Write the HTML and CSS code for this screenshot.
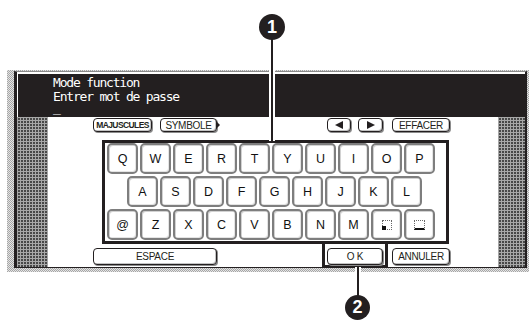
FILE: index.html
```html
<!DOCTYPE html>
<html lang="fr">
<head>
    <meta charset="UTF-8">
    <title>Mode function</title>
    <link rel="stylesheet" href="styles.css">
</head>
<body>
<div class="frame">
    <div class="screen">
        <div class="header">
            <div>Mode function</div>
            <div>Entrer mot de passe</div>
            <div class="cursor">_</div>
        </div>
        <div class="body-row">
            <div class="grid grid-l"></div>
            <div class="panel">
                <div class="toolbar">
                    <span class="btn btn-maj">MAJUSCULES</span>
                    <span class="btn btn-sym">SYMBOLE</span>
                    <span class="btn btn-left"><i class="tri tri-left"></i></span>
                    <span class="btn btn-right"><i class="tri tri-right"></i></span>
                    <span class="btn btn-eff">EFFACER</span>
                </div>
                <div class="keyboard">
                    <div class="krow">
                        <span class="key">Q</span><span class="key">W</span><span class="key">E</span><span class="key">R</span><span class="key">T</span><span class="key">Y</span><span class="key">U</span><span class="key">I</span><span class="key">O</span><span class="key">P</span>
                    </div>
                    <div class="krow krow-mid">
                        <span class="key">A</span><span class="key">S</span><span class="key">D</span><span class="key">F</span><span class="key">G</span><span class="key">H</span><span class="key">J</span><span class="key">K</span><span class="key">L</span>
                    </div>
                    <div class="krow">
                        <span class="key">@</span><span class="key">Z</span><span class="key">X</span><span class="key">C</span><span class="key">V</span><span class="key">B</span><span class="key">N</span><span class="key">M</span>
                        <span class="key"><i class="ph ph-dot"></i></span>
                        <span class="key"><i class="ph ph-space"></i></span>
                    </div>
                </div>
                <div class="bottom">
                    <span class="btn btn-espace">ESPACE</span>
                    <div class="ok-box">
                        <span class="btn btn-ok">O K</span>
                    </div>
                    <span class="btn btn-annuler">ANNULER</span>
                </div>
            </div>
            <div class="grid grid-r"></div>
        </div>
    </div>
</div>

<div class="lead lead-1"></div>
<div class="badge badge-1">1</div>
<div class="lead lead-2"></div>
<div class="badge badge-2">2</div>
</body>
</html>
```

FILE: styles.css
```css
*{
    margin: 0;
    padding: 0;
    box-sizing: border-box;
}
body{
    position: relative;
    width: 531px;
    height: 321px;
    overflow: hidden;
    background: #fff;
    color: #1e1b1c;
    font-family: "Liberation Sans", Arial, sans-serif;
}
i{
    display: block;
}

/* device frame */
.frame{
    margin: 70px 0 0 7px;
    width: 522px;
    height: 202px;
    padding: 1px 2px 4px 7px;
    background: repeating-conic-gradient(#a6a6a6 0 25%, #e4e4e4 0 50%) 0 0 / 2px 2px;
}
.screen{
    display: flex;
    flex-direction: column;
    height: 197px;
    padding-top: 2px;
    background: #fff;
    border-top: 1px solid #8a8a8a;
    border-left: 3px solid #231f20;
    border-right: 2px solid #231f20;
    border-bottom: 1px solid #231f20;
}
.header{
    height: 43px;
    margin-left: 1px;
    padding: 2px 0 0 35px;
    background: #231f20;
    color: #fff;
    font-family: "DejaVu Sans Mono", monospace;
    font-size: 13px;
    letter-spacing: -1.2px;
    line-height: 14px;
}
.cursor{
    line-height: 8px;
}
.body-row{
    display: flex;
    height: 150px;
}
.grid{
    background-color: #484848;
    background-image: linear-gradient(90deg, #a8a8a8 1px, transparent 1px),
                      linear-gradient(#a8a8a8 1px, transparent 1px);
    background-size: 3px 3px;
}
.grid-l{
    width: 31px;
}
.grid-r{
    width: 27px;
}
.panel{
    flex: 1;
    padding: 1px 0 0 45px;
}

/* buttons */
.btn{
    position: relative;
    display: flex;
    align-items: center;
    justify-content: center;
    height: 14px;
    background: #fff;
    border: 1px solid #231f20;
    border-radius: 4px;
    box-shadow: 1px 1px 0 #8c8c8c, inset -1px -1px 0 #c4c4c4;
    font-size: 10px;
    letter-spacing: -0.3px;
    color: #231f20;
}
.toolbar{
    display: flex;
}
.btn-maj{
    width: 59px;
    font-weight: bold;
    font-size: 8.5px;
    letter-spacing: -0.6px;
}
.btn-sym{
    width: 57px;
    margin-left: 8px;
}
.btn-sym::after{
    content: "";
    position: absolute;
    right: -4px;
    top: 2px;
    border-left: 4px solid #231f20;
    border-top: 4px solid transparent;
    border-bottom: 4px solid transparent;
}
.btn-left{
    width: 24px;
    margin-left: 110px;
}
.btn-right{
    width: 25px;
    margin-left: 7px;
}
.btn-eff{
    width: 58px;
    margin-left: 9px;
}
.tri{
    width: 0;
    height: 0;
    border-top: 4px solid transparent;
    border-bottom: 4px solid transparent;
}
.tri-left{
    border-right: 8px solid #231f20;
}
.tri-right{
    border-left: 8px solid #231f20;
}

/* keyboard */
.keyboard{
    display: flex;
    flex-direction: column;
    gap: 2px;
    width: 347px;
    margin: 8px 0 0 9px;
    padding-bottom: 1px;
    border: 3px solid #231f20;
}
.krow{
    display: flex;
    gap: 2px;
    padding-left: 2px;
}
.krow-mid{
    padding-left: 22px;
}
.key{
    display: flex;
    align-items: center;
    justify-content: center;
    width: 31px;
    height: 31px;
    border: 2px solid #7e7e7e;
    border-radius: 5px;
    box-shadow: inset 1px 1px 0 #d2d2d2, inset -1px -1px 0 #e4e4e4;
    font-size: 12.5px;
    color: #111;
}
.ph{
    position: relative;
    width: 10px;
    height: 10px;
    border: 1px dotted #6a6a6a;
}
.ph-dot::after{
    content: "";
    position: absolute;
    left: -1px;
    bottom: -1px;
    width: 4px;
    height: 4px;
    background: #111;
}
.ph-space{
    width: 11px;
    border-bottom: 2px solid #111;
}

/* bottom row */
.bottom{
    display: flex;
    align-items: flex-start;
}
.btn-espace{
    width: 124px;
    height: 17px;
    margin-top: 4px;
}
.ok-box{
    width: 66px;
    height: 24px;
    margin-left: 105px;
    padding: 4px 2px 0;
    border: 3px solid #231f20;
    border-top: 0;
}
.btn-ok{
    height: 17px;
}
.btn-annuler{
    width: 58px;
    height: 17px;
    margin: 4px 0 0 4px;
}

/* callouts */
.badge{
    position: absolute;
    width: 26px;
    height: 26px;
    border-radius: 50%;
    background: #231f20;
    color: #fff;
    font-weight: bold;
    font-size: 18px;
    line-height: 26px;
    text-align: center;
}
.badge-1{
    left: 259px;
    top: 14px;
}
.badge-2{
    left: 345px;
    top: 295px;
    width: 25px;
    height: 25px;
    line-height: 25px;
}
.lead{
    position: absolute;
    width: 6px;
    background: #231f20;
    border-left: 2px solid #fff;
    border-right: 2px solid #fff;
}
.lead-1{
    left: 269px;
    top: 38px;
    height: 103px;
}
.lead-2{
    left: 355px;
    top: 267px;
    height: 30px;
}
```
